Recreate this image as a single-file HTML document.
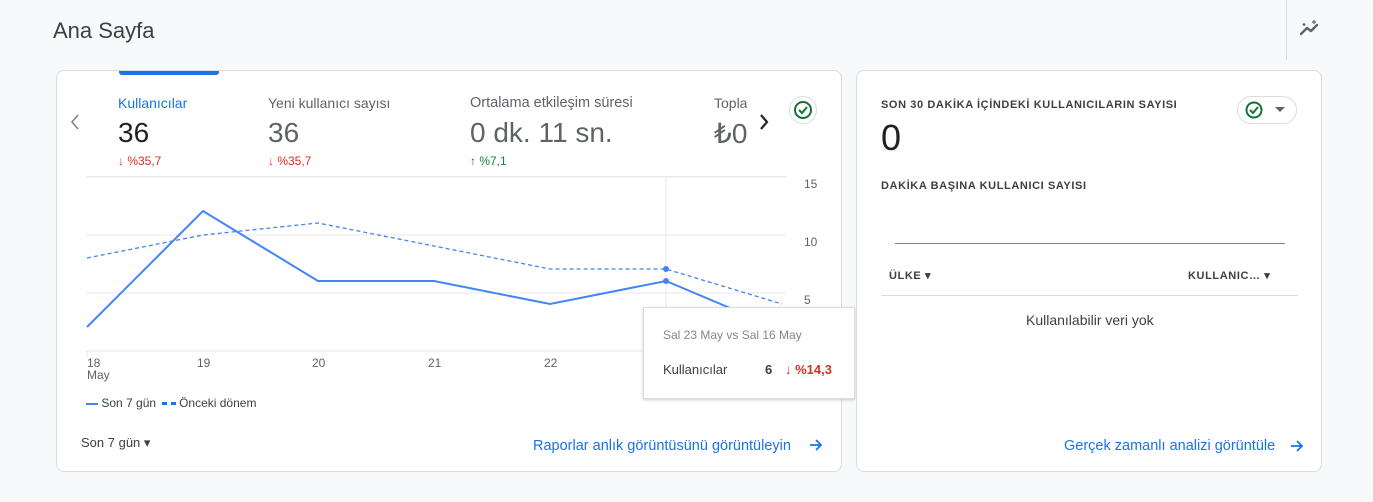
<!DOCTYPE html>
<html><head><meta charset="utf-8"><style>
*{box-sizing:border-box;margin:0;padding:0}
body{width:1373px;height:502px;background:#f8f9fa;font-family:"Liberation Sans",Arial,sans-serif;position:relative;overflow:hidden;color:#202124}
.a{position:absolute}
.card{position:absolute;background:#fff;border:1px solid #dadce0;border-radius:8px}
</style></head><body>
<div class="a" style="left:53px;top:18px;font-size:22px;color:#3c4043">Ana Sayfa</div>
<div class="a" style="left:1286px;top:0;width:1px;height:60px;background:#dadce0"></div>
<svg class="a" style="left:1298px;top:18px" width="26" height="22" viewBox="0 0 26 22"><path d="M3 16 L9 10 L13 13 L19 7" stroke="#5f6368" stroke-width="2.4" fill="none" stroke-linecap="round" stroke-linejoin="round"/><path d="M16 2v4M14 4h4M6 5v3M4.5 6.5h3" stroke="#5f6368" stroke-width="1.2"/></svg>

<div class="card" style="left:56px;top:70px;width:786px;height:402px;overflow:hidden">
 <div class="a" style="left:62px;top:-2px;width:100px;height:6px;background:#1a73e8;border-radius:0 0 3px 3px"></div>
 <svg class="a" style="left:12px;top:42px" width="12" height="18"><path d="M9 2L3 9l6 7" stroke="#80868b" stroke-width="1.6" fill="none"/></svg>
 <div class="a" style="left:61px;top:24px;font-size:14px;color:#1a73e8">Kullanıcılar</div>
 <div class="a" style="left:61px;top:46px;font-size:28px">36</div>
 <div class="a" style="left:61px;top:83px;font-size:12px;color:#d93025">↓ %35,7</div>
 <div class="a" style="left:211px;top:24px;font-size:14px;color:#5f6368">Yeni kullanıcı sayısı</div>
 <div class="a" style="left:211px;top:46px;font-size:28px;color:#5f6368">36</div>
 <div class="a" style="left:211px;top:83px;font-size:12px;color:#d93025">↓ %35,7</div>
 <div class="a" style="left:413px;top:24px;font-size:14.5px;color:#5f6368">Ortalama etkileşim süresi</div>
 <div class="a" style="left:413px;top:46px;font-size:28px;color:#5f6368">0 dk. 11 sn.</div>
 <div class="a" style="left:413px;top:83px;font-size:12px;color:#188038">↑ %7,1</div>
 <div class="a" style="left:657px;top:24px;width:33px;overflow:hidden;white-space:nowrap;font-size:14px;color:#5f6368">Toplam</div>
 <div class="a" style="left:657px;top:46px;width:33px;overflow:hidden;font-size:28px;color:#5f6368">₺0</div>
 <svg class="a" style="left:701px;top:42px" width="12" height="18"><path d="M3 2l6 7-6 7" stroke="#202124" stroke-width="2.2" fill="none"/></svg>
 <div class="a" style="left:732px;top:25px;width:28px;height:28px;border:1px solid #dadce0;border-radius:50%"></div>
 <svg class="a" style="left:736px;top:29px" width="20" height="20"><circle cx="10" cy="10" r="8" fill="none" stroke="#137333" stroke-width="2"/><path d="M6 10l3 3 5-6" stroke="#137333" stroke-width="2" fill="none"/></svg>
 <div class="a" style="left:30px;top:105px;width:700px;height:1px;background:#e8eaed"></div>
</div>
<svg class="a" style="left:56px;top:170px" width="786" height="200">
 <g stroke="#e8eaed"><line x1="30" y1="7" x2="730" y2="7"/><line x1="30" y1="65" x2="730" y2="65"/><line x1="30" y1="123" x2="730" y2="123"/><line x1="30" y1="181" x2="730" y2="181"/><line x1="610" y1="7" x2="610" y2="181"/><line x1="31" y1="181" x2="31" y2="188"/></g>
 <g font-size="12" fill="#5f6368" font-family="Liberation Sans"><text x="748" y="18">15</text><text x="748" y="76">10</text><text x="748" y="134">5</text><text x="755" y="176">0</text>
 <text x="31" y="197">18</text><text x="141" y="197">19</text><text x="256" y="197">20</text><text x="372" y="197">21</text><text x="488" y="197">22</text></g>
 <polyline points="31,88 147,65 262,53 378,76 494,99 610,99 726,134" fill="none" stroke="#4285f4" stroke-width="1.3" stroke-dasharray="4,3"/>
 <polyline points="31,157 147,41 262,111 378,111 494,134 610,111 726,160" fill="none" stroke="#4285f4" stroke-width="2"/>
 <circle cx="610" cy="99" r="3" fill="#4285f4"/><circle cx="610" cy="111" r="3" fill="#4285f4"/>
</svg>
<div class="a" style="left:87px;top:368px;font-size:12px;color:#5f6368">May</div>
<div class="a" style="left:86px;top:396px;font-size:12px;color:#3c4043;white-space:nowrap"><span style="display:inline-block;width:12px;height:2px;background:#4285f4;vertical-align:middle"></span> Son 7 gün <span style="display:inline-block;width:5px;height:3px;background:#1a73e8;vertical-align:middle;margin-left:3px"></span> <span style="display:inline-block;width:5px;height:3px;background:#1a73e8;vertical-align:middle"></span> Önceki dönem</div>
<div class="a" style="left:81px;top:435px;font-size:13px;color:#3c4043">Son 7 gün ▾</div>
<div class="a" style="left:533px;top:438px;font-size:14.5px;color:#1a73e8;white-space:nowrap">Raporlar anlık görüntüsünü görüntüleyin</div>
<svg class="a" style="left:809px;top:438px" width="14" height="14"><path d="M1 7h11M7 2l5 5-5 5" stroke="#1a73e8" stroke-width="1.8" fill="none"/></svg>
<div class="a" style="left:643px;top:307px;width:212px;height:92px;background:#fff;border:1px solid #dadce0;box-shadow:0 1px 3px rgba(0,0,0,.2)">
 <div class="a" style="left:19px;top:20px;font-size:12px;color:#80868b">Sal 23 May vs Sal 16 May</div>
 <div class="a" style="left:19px;top:54px;font-size:13px;color:#3c4043">Kullanıcılar</div>
 <div class="a" style="left:121px;top:54px;font-size:13px;font-weight:bold;color:#3c4043">6</div>
 <div class="a" style="left:141px;top:54px;font-size:13px;font-weight:bold;color:#d93025">↓ %14,3</div>
</div>

<div class="card" style="left:856px;top:70px;width:466px;height:402px">
 <div class="a" style="left:24px;top:28px;font-size:11px;letter-spacing:.6px;color:#3c4043;font-weight:bold">SON 30 DAKİKA İÇİNDEKİ KULLANICILARIN SAYISI</div>
 <div class="a" style="left:24px;top:46px;font-size:36px;color:#202124">0</div>
 <div class="a" style="left:380px;top:25px;width:60px;height:28px;border:1px solid #dadce0;border-radius:14px"></div>
 <svg class="a" style="left:387px;top:29px" width="20" height="20"><circle cx="10" cy="10" r="7.5" fill="none" stroke="#137333" stroke-width="2"/><path d="M6 10l3 3 5-6" stroke="#137333" stroke-width="2" fill="none"/></svg>
 <svg class="a" style="left:418px;top:36px" width="10" height="6"><path d="M0 0h10L5 5z" fill="#5f6368"/></svg>
 <div class="a" style="left:24px;top:109px;font-size:11px;letter-spacing:.6px;color:#3c4043;font-weight:bold">DAKİKA BAŞINA KULLANICI SAYISI</div>
 <div class="a" style="left:38px;top:172px;width:390px;height:1px;background:#80868b"></div>
 <div class="a" style="left:32px;top:198px;font-size:11px;letter-spacing:.6px;color:#3c4043;font-weight:bold">ÜLKE ▾</div>
 <div class="a" style="left:331px;top:198px;font-size:11px;letter-spacing:.6px;color:#3c4043;font-weight:bold">KULLANIC… ▾</div>
 <div class="a" style="left:24px;top:224px;width:417px;height:1px;background:#dadce0"></div>
 <div class="a" style="left:169px;top:241px;font-size:14px;color:#3c4043">Kullanılabilir veri yok</div>
 <div class="a" style="left:207px;top:367px;font-size:14.5px;color:#1a73e8;white-space:nowrap">Gerçek zamanlı analizi görüntüle</div>
 <svg class="a" style="left:433px;top:368px" width="14" height="14"><path d="M1 7h11M7 2l5 5-5 5" stroke="#1a73e8" stroke-width="1.8" fill="none"/></svg>
</div>
</body></html>
